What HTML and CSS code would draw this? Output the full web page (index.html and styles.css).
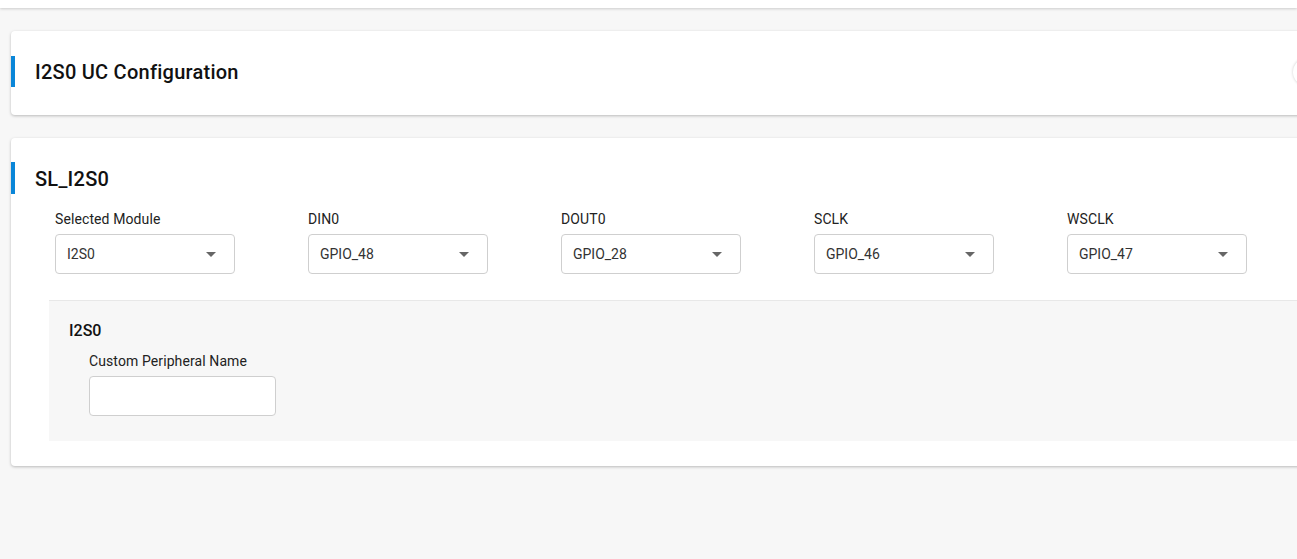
FILE: index.html
```html
<!DOCTYPE html>
<html lang="en">
<head>
    <meta charset="UTF-8">
    <meta name="viewport" content="width=device-width, initial-scale=1.0">
    <title>I2S0 UC Configuration</title>
    <link rel="stylesheet" href="styles.css">
</head>
<body>
    <div class="topbar"></div>

    <div class="page">
        <div class="card card-title">
            <div class="card-header">
                <span class="accent"></span>
                <h2>I2S0 UC Configuration</h2>
                <span class="round-btn"></span>
            </div>
        </div>

        <div class="card card-main">
            <div class="card-header">
                <span class="accent"></span>
                <h2>SL_I2S0</h2>
            </div>

            <div class="fields">
                <div class="field">
                    <label>Selected Module</label>
                    <div class="select"><span>I2S0</span><i class="caret"></i></div>
                </div>
                <div class="field">
                    <label>DIN0</label>
                    <div class="select"><span>GPIO_48</span><i class="caret"></i></div>
                </div>
                <div class="field">
                    <label>DOUT0</label>
                    <div class="select"><span>GPIO_28</span><i class="caret"></i></div>
                </div>
                <div class="field">
                    <label>SCLK</label>
                    <div class="select"><span>GPIO_46</span><i class="caret"></i></div>
                </div>
                <div class="field">
                    <label>WSCLK</label>
                    <div class="select"><span>GPIO_47</span><i class="caret"></i></div>
                </div>
            </div>

            <div class="sub-panel">
                <h3>I2S0</h3>
                <div class="sub-field">
                    <label>Custom Peripheral Name</label>
                    <input type="text" class="text-input">
                </div>
            </div>
        </div>
    </div>
</body>
</html>
```

FILE: styles.css
```css
html, body {
    margin: 0;
    padding: 0;
}
body {
    font-family: Roboto, "Liberation Sans", Arial, sans-serif;
    background-color: #f7f7f7;
    color: #222;
    overflow: hidden;
    height: 559px;
}
.topbar {
    height: 8px;
    background: white;
    box-shadow: 0 1px 3px rgba(0,0,0,0.18);
}
.page {
    width: 1319px;
    padding: 23px 0 0 11px;
}
.card {
    background: white;
    border-radius: 4px;
    box-shadow: 0 1px 3px rgba(0,0,0,0.25);
}
.card-title {
    padding: 25px 0 28px;
    margin-bottom: 23px;
}
.card-header {
    display: flex;
    align-items: center;
}
.accent {
    width: 4px;
    height: 31px;
    background: #0a86d8;
}
.card-header h2 {
    margin: 0 0 0 20px;
    font-size: 20px;
    font-weight: 500;
    letter-spacing: 0.25px;
    color: #111;
    flex: 1;
}
.card-main .card-header h2 {
    padding-top: 2px;
}
.round-btn {
    width: 28px;
    height: 28px;
    border-radius: 50%;
    background: white;
    box-shadow: 0 0 3px rgba(0,0,0,0.2);
    margin-right: 9px;
}
.card-main {
    padding: 24px 0 25px;
}
.card-main .accent {
    height: 32px;
}
.fields {
    display: flex;
    gap: 73px;
    padding: 15px 0 0 44px;
}
.field label,
.sub-field label {
    display: block;
    font-size: 14px;
    line-height: 20px;
    letter-spacing: 0.1px;
    color: #222;
    margin-bottom: 5px;
}
.select {
    width: 180px;
    height: 40px;
    box-sizing: border-box;
    border: 1px solid #cfcfcf;
    border-radius: 4px;
    display: flex;
    align-items: center;
    justify-content: space-between;
    padding: 0 18px 0 11px;
    font-size: 14px;
    color: #333;
}
.caret {
    width: 0;
    height: 0;
    border-left: 5px solid transparent;
    border-right: 5px solid transparent;
    border-top: 5px solid #666;
}
.sub-panel {
    margin: 26px 0 0 38px;
    background: #f7f7f7;
    border-top: 1px solid #e8e8e8;
    padding: 20px 0 25px 20px;
}
.sub-panel h3 {
    margin: 0;
    font-size: 16px;
    line-height: 20px;
    font-weight: 500;
    color: #111;
}
.sub-field {
    padding: 10px 0 0 20px;
}
.text-input {
    display: block;
    width: 187px;
    height: 40px;
    box-sizing: border-box;
    border: 1px solid #cfcfcf;
    border-radius: 4px;
    background: white;
    font-family: inherit;
    font-size: 14px;
}
```
